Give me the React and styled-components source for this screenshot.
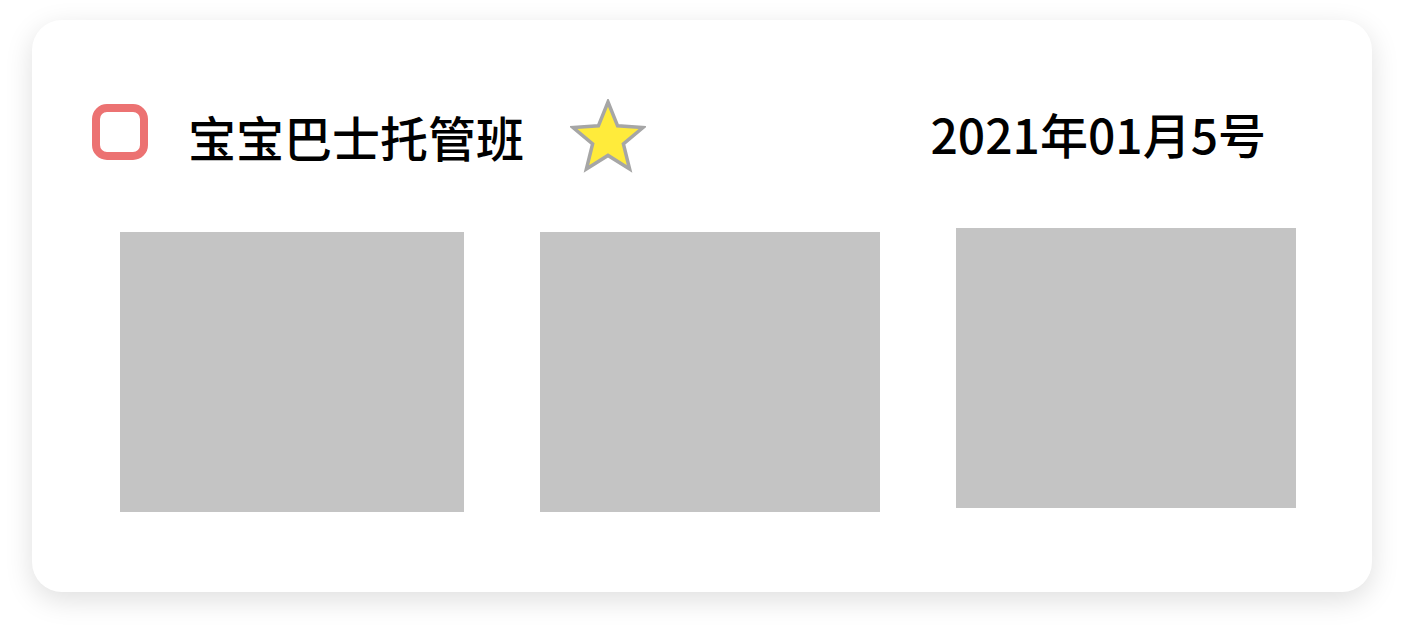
import React from 'react';
import styled, { createGlobalStyle } from 'styled-components';

const GlobalStyle = createGlobalStyle`
    body{
        margin: 0;
        background: #ffffff;
        font-family: "Noto Sans CJK SC", "Noto Sans", sans-serif;
    }
`

const Page = styled.div`
    width: 1404px;
    height: 636px;
    padding: 20px 32px 0 32px;
    box-sizing: border-box;
`

const Card = styled.div`
    width: 1340px;
    height: 572px;
    box-sizing: border-box;
    background: #ffffff;
    border-radius: 30px;
    box-shadow: 0 8px 28px rgba(0, 0, 0, 0.13);
    padding-top: 80px;
`

const Header = styled.div`
    display: flex;
    align-items: center;
    height: 72px;
    padding-left: 60px;
    padding-right: 106px;
`

const Checkbox = styled.div`
    width: 56px;
    height: 56px;
    box-sizing: border-box;
    border: 8px solid #ec7272;
    border-radius: 15px;
    margin-bottom: 8px;
    flex-shrink: 0;
`

const Title = styled.div`
    margin-left: 40px;
    font-size: 48px;
    line-height: 1;
    color: #000;
    font-weight: 500;
`

const Star = styled.svg`
    margin-left: 46px;
    width: 76px;
    height: 74px;
    flex-shrink: 0;
`

const DateText = styled.div`
    margin-left: auto;
    margin-bottom: 6px;
    font-size: 48px;
    line-height: 1;
    color: #000;
    font-weight: 500;
`

const Gallery = styled.div`
    display: flex;
    align-items: flex-start;
    gap: 76px;
    padding-left: 88px;
    margin-top: 60px;
`

const Photo = styled.div`
    width: ${p => p.w}px;
    height: 280px;
    background: #c4c4c4;
    margin-top: ${p => p.shift || 0}px;
`

export default function App() {
  return (
      <Page>
          <GlobalStyle />
          <Card>
              <Header>
                  <Checkbox />
                  <Title>宝宝巴士托管班</Title>
                  <Star viewBox="0 0 76 74">
                      <polygon
                          points="38,3 47.6,26.8 73,28.6 53.4,45 59.6,70 38,56.4 16.4,70 22.6,45 3,28.6 28.4,26.8"
                          fill="#ffeb3b"
                          stroke="#a6a6a6"
                          strokeWidth="3.5"
                          strokeLinejoin="miter"
                      />
                  </Star>
                  <DateText>2021年01月5号</DateText>
              </Header>
              <Gallery>
                  <Photo w={344} />
                  <Photo w={340} />
                  <Photo w={340} shift={-4} />
              </Gallery>
          </Card>
      </Page>
  )
}
